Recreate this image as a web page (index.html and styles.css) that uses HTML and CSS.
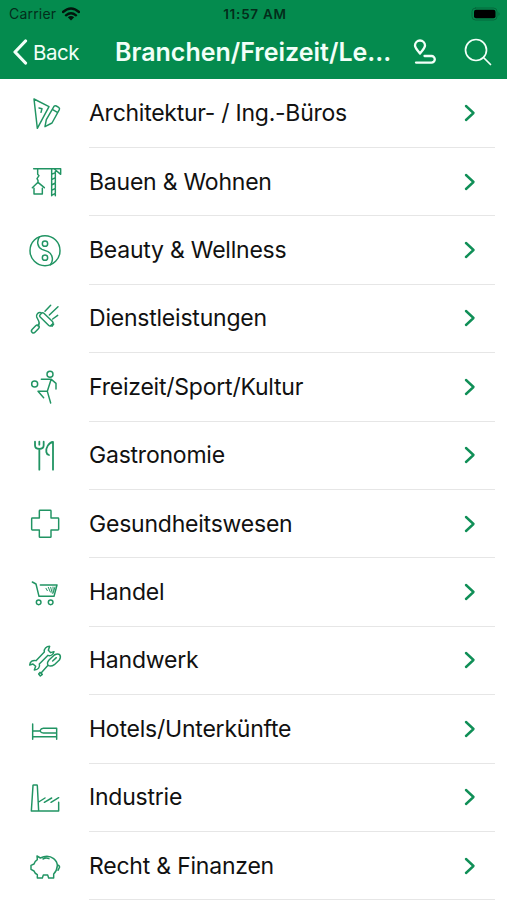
FILE: index.html
```
<!DOCTYPE html>
<html lang="de">
<head>
  <meta charset="UTF-8">
  <meta name="viewport" content="width=device-width, initial-scale=1">
  <title>Branchen</title>
  <link rel="stylesheet" href="styles.css">
</head>
<body>
  <header>
    <div class="statusbar">
      <div class="carrier">
        <span>Carrier</span>
        <svg class="wifi" viewBox="0 0 18 14"><path d="M1 5Q9-2 17 5M4 8.300Q9 4 14 8.300"/><path class="dot" d="M5.800 10.200Q9 7.600 12.200 10.200L9 13.400Z"/></svg>
      </div>
      <span class="time">11:57 AM</span>
      <svg class="battery" viewBox="0 0 30 14"><rect class="shell" x="1" y="1" width="25" height="12" rx="3.500"/><rect x="3" y="2.800" width="21.500" height="8.400" rx="2"/><path class="tip" d="M27.500 5q2 2 0 4z"/></svg>
    </div>
    <nav class="navbar">
      <a class="back" href="#">
        <svg viewBox="0 0 16 26"><path d="M13.500 2L3 13l10.500 11"/></svg>
        <span>Back</span>
      </a>
      <h1>Branchen/Freizeit/Le...</h1>
      <svg class="route" viewBox="0 0 24 26"><path d="M7 14.500C4 10.500 2 9 2 6.500a5 5 0 0 1 10 0C12 9 10 10.500 7 14.500Z"/><path d="M11.500 17H18.500a3.300 3.300 0 0 1 0 6.600H3"/></svg>
      <svg class="search" viewBox="0 0 28 28"><circle cx="12" cy="12" r="10.500"/><path d="M19.500 19.500L26.500 26.500"/></svg>
    </nav>
  </header>

  <ul class="list">
    <li>
      <svg class="icon" viewBox="0 0 120 120"><path d="M27 15L72 38 37 103ZM42 42L51 44 48 55M60 98L64 77 87 37Q90 34 94 36L101 40Q105 43 103 47L81 87ZM82 46L97 55"/></svg>
      <span class="name tight">Architektur- / Ing.-Büros</span>
    </li>
    <li>
      <svg class="icon" viewBox="0 0 120 120"><path d="M26 20H107V37L88 21M80 20V101M91 20V101M80 37L91 32M80 53L91 47M80 69L91 63M80 85L91 79M80 100L91 94M38 20V37L42 41 36 50 39 55V61M22 77L39 61 58 77M27 79V96H52V79"/></svg>
      <span class="name">Bauen &amp; Wohnen</span>
    </li>
    <li>
      <svg class="icon" viewBox="0 0 120 120"><circle cx="60" cy="59" r="45"/><circle cx="60" cy="38" r="8"/><circle cx="60" cy="80" r="8"/><path d="M44 17C34 30 37 49 51 55L69 62C84 70 86 90 76 101"/></svg>
      <span class="name">Beauty &amp; Wellness</span>
    </li>
    <li>
      <svg class="icon" viewBox="0 0 120 120"><rect x="41" y="53" width="46" height="16" rx="5" transform="rotate(44 64 61)"/><path d="M48 41C40 38 33 46 35 54L41 66Q45 74 39 81M60 37L77 19M73 48L99 23M83 60L98 49M81 82L86 75"/><rect x="17" y="84" width="28" height="12" rx="6" transform="rotate(-47 31 90)"/></svg>
      <span class="name">Dienstleistungen</span>
    </li>
    <li>
      <svg class="icon" viewBox="0 0 120 120"><circle cx="75" cy="22" r="9"/><circle cx="29" cy="51" r="9"/><path d="M49 37H79L93 49V66M78 38L67 73 77 108M67 73H39L56 92"/></svg>
      <span class="name">Freizeit/Sport/Kultur</span>
    </li>
    <li>
      <svg class="icon" viewBox="0 0 120 120"><path class="thick" d="M30 17V28Q30 39 43 39T56 28V17M43 17V26M43 40V101M84 101V18C71 19 62 36 64 48Q65 55 72 57"/></svg>
      <span class="name">Gastronomie</span>
    </li>
    <li>
      <svg class="icon" viewBox="0 0 120 120"><path d="M45 19H76Q78 19 78 21V42H99Q101 42 101 44V76Q101 78 99 78H78V98Q78 100 76 100H45Q43 100 43 98V78H22Q20 78 20 76V44Q20 42 22 42H43V21Q43 19 45 19Z"/></svg>
      <span class="name">Gesundheitswesen</span>
    </li>
    <li>
      <svg class="icon" viewBox="0 0 120 120"><path d="M22 27L33 33 42 70H87L96 36H46"/><path class="thin" d="M63 46L67 53M70 43L76 57M77 43L82 61M84 42L85 60M90 42L86 56"/><circle cx="41" cy="88" r="7"/><circle cx="77" cy="88" r="7"/></svg>
      <span class="name">Handel</span>
    </li>
    <li>
      <svg class="icon" viewBox="0 0 120 120"><path d="M43 69L69 43C77 46 85 41 87 32L77 35 70 28 74 16C64 16 56 23 58 33L33 59C24 56 15 62 14 72L24 69 32 76 28 87C39 87 46 78 43 69Z"/><path d="M69 73Q65 64 72 57L88 42Q98 36 104 41 109 47 103 57L88 71Q78 78 69 73ZM83 60L94 50M69 73L49 95M45 94L52 100 46 105 41 99Z"/></svg>
      <span class="name">Handwerk</span>
    </li>
    <li>
      <svg class="icon" viewBox="0 0 120 120"><path d="M23 45V91M95 58V91M23 83H95M23 66H45M95 58H55Q48 58 45 65 48 72 55 72H95"/></svg>
      <span class="name">Hotels/Unterkünfte</span>
    </li>
    <li>
      <svg class="icon" viewBox="0 0 120 120"><path d="M19 99L24 23Q24 21 26 21H35Q37 21 37 23L41 99M19 99H101V73M41 72L60 60M58 73L80 60M78 73L101 59"/></svg>
      <span class="name">Industrie</span>
    </li>
    <li>
      <svg class="icon" viewBox="0 0 120 120"><path d="M36 30L46 36Q69 25 86 38 97 47 97 59 96 74 86 84V96H71L68 87H55L52 96H37V86Q29 82 27 75L18 70V58L27 54Q29 46 37 41ZM54 39Q63 34 72 38M98 57Q107 61 102 67L99 73"/></svg>
      <span class="name">Recht &amp; Finanzen</span>
    </li>
  </ul>

  <script>
    // same chevron at the end of every row
    document.querySelectorAll(".name").forEach(name => {
      const label = document.createElement("span");
      label.textContent = name.textContent;
      name.textContent = "";
      name.appendChild(label);
      name.insertAdjacentHTML("beforeend", '<svg class="chevron" viewBox="0 0 12 18"><path d="M2 2l7.500 7L2 16"/></svg>');
    });
  </script>
</body>
</html>
```
FILE: styles.css
```
* { margin: 0; padding: 0; box-sizing: border-box; }
body {
  height: 900px;
  overflow: hidden;
  font-family: Inter, "Liberation Sans", sans-serif;
  background: #fff;
  color: #111;
}
svg {
  display: block;
  flex: none;
  fill: none;
  stroke-linecap: round;
  stroke-linejoin: round;
}
header {
  height: 79px;
  background: #048b4e;
}
.statusbar {
  display: grid;
  grid-template-columns: 1fr auto 1fr;
  align-items: center;
  height: 27px;
  padding: 0 6px 0 9px;
  font-size: 14px;
  color: #032d1b;
}
.carrier {
  display: flex;
  align-items: center;
  gap: 6px;
  letter-spacing: 0.2px;
}
.wifi {
  width: 18px;
  height: 14px;
  stroke: #02150c;
  stroke-width: 2.4;
}
.wifi .dot { fill: #02150c; stroke: none; }
.time {
  font-size: 13.5px;
  font-weight: 600;
  letter-spacing: 0.75px;
}
.battery {
  width: 30px;
  height: 14px;
  justify-self: end;
  fill: #000;
}
.battery .shell { fill: none; stroke: #04693c; }
.battery .tip { fill: #04693c; }
.navbar {
  display: flex;
  align-items: center;
  height: 50px;
  padding-left: 12px;
  color: #f2fff8;
}
.navbar svg { stroke: #f2fff8; }
.back {
  display: flex;
  align-items: center;
  gap: 5px;
  width: 103px;
  color: inherit;
  font-size: 20.5px;
  letter-spacing: -0.5px;
  text-decoration: none;
}
.back svg {
  width: 16px;
  height: 26px;
  stroke-width: 3.2;
}
h1 {
  width: 298px;
  font-size: 25px;
  font-weight: 600;
  white-space: nowrap;
}
.navbar .route {
  width: 24px;
  height: 26px;
  stroke-width: 2.3;
}
.search {
  width: 28px;
  height: 28px;
  margin-left: 27px;
  stroke-width: 1.7;
}
.list {
  padding-top: 0.6px;
  list-style: none;
}
.list li {
  display: flex;
  align-items: center;
  height: 68.4px;
  padding: 0 12px 0 25px;
}
.icon {
  width: 40px;
  height: 40px;
  margin-right: 24px;
  stroke: #219463;
  stroke-width: 4.4;
}
.icon .thin { stroke-width: 3; }
.icon .thick { stroke-width: 5.4; }
.name {
  display: flex;
  flex: 1;
  align-items: center;
  justify-content: space-between;
  height: 100%;
  padding-right: 19px;
  border-bottom: 1px solid #e6e6e6;
  font-size: 23px;
  letter-spacing: -0.22px;
  white-space: nowrap;
}
.name.tight { letter-spacing: -0.26px; }
.chevron {
  width: 12px;
  height: 18px;
  stroke: #108f57;
  stroke-width: 2.4;
}
```
